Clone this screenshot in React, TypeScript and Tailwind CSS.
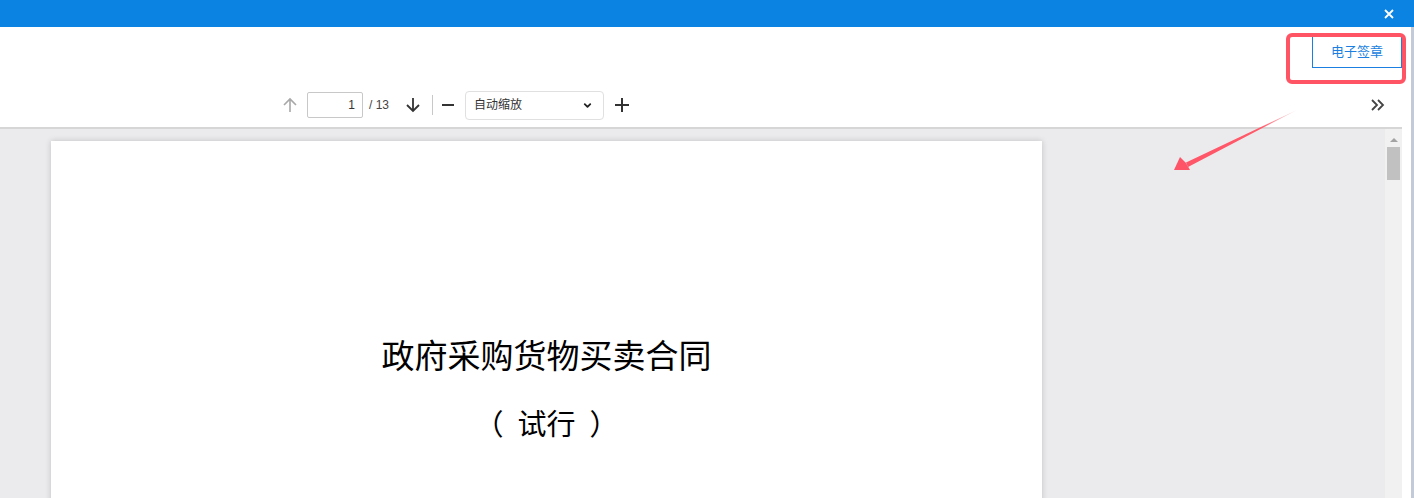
import { ChevronDown } from "lucide-react";

const sans = "font-['Liberation_Sans','Noto_Sans_CJK_SC',sans-serif]";

const ArrowUpIcon = ({ className }: { className?: string }) => (
  <svg viewBox="0 0 16 16" className={className} fill="none" stroke="currentColor" strokeWidth="1.6">
    <path d="M8 15V2M2 8l6-6 6 6" />
  </svg>
);

const ArrowDownIcon = ({ className }: { className?: string }) => (
  <svg viewBox="0 0 16 16" className={className} fill="none" stroke="currentColor" strokeWidth="1.8">
    <path d="M8 1v13M2 8l6 6 6-6" />
  </svg>
);

const Toolbar = () => (
  <div className={`flex h-[46px] shrink-0 items-center border-b-2 border-[#d6d6d6] text-[12px] text-[#333] ${sans}`}>
    <div className="ml-[282px] flex items-center">
      <ArrowUpIcon className="h-[16px] w-[16px] text-[#a8a8a8]" />
      <div className="ml-[9px] flex h-[26px] w-[56px] items-center justify-end rounded-[2px] border border-[#c8c8c8] bg-white pr-[7px]">
        1
      </div>
      <span className="ml-[6px] text-[#444]">/ 13</span>
      <ArrowDownIcon className="ml-[16px] h-[16px] w-[16px] text-[#333]" />
      <div className="ml-[11px] h-[20px] w-px bg-[#c8c8c8]" />
      <div className="ml-[9px] h-[2px] w-[12px] bg-[#333]" />
      <div className="ml-[11px] flex h-[29px] w-[139px] items-center justify-between rounded-[4px] border border-[#e0e0e0] bg-white pl-[8px] pr-[10px]">
        <span className="text-[#333]">自动缩放</span>
        <ChevronDown className="h-[11px] w-[11px] text-[#222]" strokeWidth={4} />
      </div>
      <div className="relative ml-[11px] h-[14px] w-[14px]">
        <div className="absolute left-0 top-[6px] h-[2px] w-[14px] bg-[#333]" />
        <div className="absolute left-[6px] top-0 h-[14px] w-[2px] bg-[#333]" />
      </div>
    </div>
    <div className="ml-auto mr-[16px] text-[#444]">
      <svg viewBox="0 0 16 16" className="h-[16px] w-[16px]" fill="none" stroke="currentColor" strokeWidth="1.8">
        <path d="M2 3l5 5-5 5M8 3l5 5-5 5" />
      </svg>
    </div>
  </div>
);

export default function App() {
  return (
    <div className={`relative h-[498px] w-[1414px] overflow-hidden bg-white ${sans}`}>
      <div className="flex h-[27px] items-center justify-end bg-[#0b83e3] pr-[20px]">
        <svg viewBox="0 0 10 10" className="h-[10px] w-[10px] text-white" stroke="currentColor" strokeWidth="1.8">
          <path d="M1 1l8 8M9 1l-8 8" />
        </svg>
      </div>
      <div className="flex h-[471px]">
        <div className="flex w-[1402px] flex-col">
          <div className="flex h-[56px] shrink-0 justify-end pt-[9px]">
            <button className="h-[32px] w-[90px] border border-[#1a7fe0] bg-white text-[13px] text-[#1a7fe0]">
              电子签章
            </button>
          </div>
          <Toolbar />
          <div className="flex min-h-0 flex-1 overflow-hidden bg-[#ebebed]">
            <div className="flex-1 pl-[51px] pt-[12px]">
              <div className="flex h-[400px] w-[991px] flex-col items-center bg-white pt-[196px] shadow-[0_0_6px_rgba(0,0,0,0.18)] font-['Liberation_Serif','Noto_Sans_CJK_SC',serif] text-black">
                <div className="text-[33px] leading-[40px]">政府采购货物买卖合同</div>
                <div className="mt-[28px] text-[29px] leading-[40px]">
                  <span className="mr-[14px]">（</span>试行<span className="ml-[14px]">）</span>
                </div>
              </div>
            </div>
            <div className="flex w-[17px] flex-col items-center bg-[#f1f1f1] pt-[9px]">
              <div className="h-0 w-0 border-x-[4px] border-b-[4px] border-x-transparent border-b-[#a3a3a3]" />
              <div className="mt-[5px] h-[33px] w-[13px] bg-[#c1c1c1]" />
            </div>
          </div>
        </div>
        <div className="w-[9px] bg-white" />
        <div className="w-[3px] bg-[#c4cbd8]" />
      </div>

      <div className="pointer-events-none absolute left-[1286px] top-[33px] h-[51px] w-[120px] rounded-[6px] border-[4px] border-[#ff5463]" />
      <svg className="pointer-events-none absolute left-0 top-0" width="1414" height="498">
        <defs>
          <linearGradient id="arr" x1="1297" y1="110" x2="1175" y2="170" gradientUnits="userSpaceOnUse">
            <stop offset="0" stopColor="#ff5a6a" stopOpacity="0.2" />
            <stop offset="0.3" stopColor="#ff5a6a" />
            <stop offset="1" stopColor="#ff5468" />
          </linearGradient>
        </defs>
        <path d="M1297 110 L1186 162.5 L1188 167 Z" fill="url(#arr)" />
        <path d="M1174 170 L1180 157 L1186 163 L1190 170 Z" fill="#ff5468" />
      </svg>
    </div>
  );
}
